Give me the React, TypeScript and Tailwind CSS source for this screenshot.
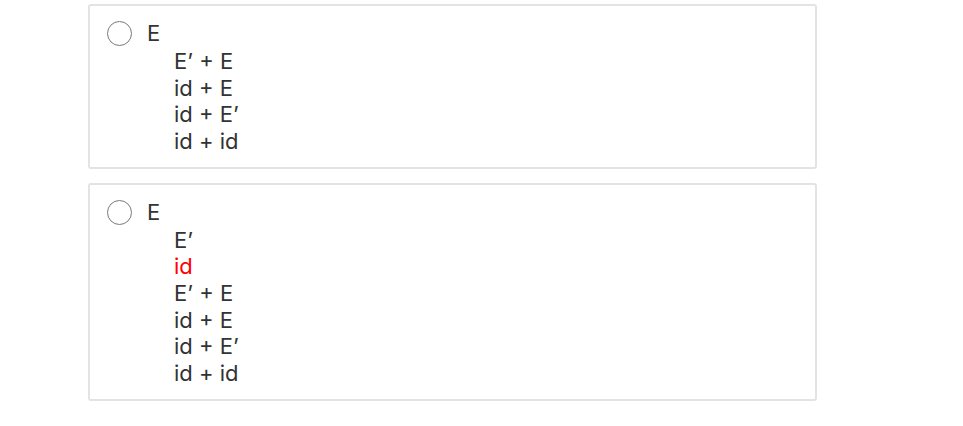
import React from 'react'

type Line = { text: string; red?: boolean }

interface Choice {
  id: string
  head: string
  lines: Line[]
}

const CHOICES: Choice[] = [
  {
    id: 'a',
    head: 'E',
    lines: [
      { text: 'E’ + E' },
      { text: 'id + E' },
      { text: 'id + E’' },
      { text: 'id + id' },
    ],
  },
  {
    id: 'b',
    head: 'E',
    lines: [
      { text: 'E’' },
      { text: 'id', red: true },
      { text: 'E’ + E' },
      { text: 'id + E' },
      { text: 'id + E’' },
      { text: 'id + id' },
    ],
  },
]

/* ─── One answer box ─────────────────────────────────────────────────────── */

function AnswerBox({ choice }: { choice: Choice }) {
  return (
    <label className="block w-[729px] rounded-[3px] border-2 border-[#e3e3e3] bg-white pt-[13px] pb-[12px] pl-[17px]">
      <div className="flex items-center h-[29px]">
        <span className="w-[25px] h-[25px] rounded-full border-[1.5px] border-[#7a7a7a] bg-white flex-shrink-0" />
        <span className="ml-[15px] leading-[29px]">{choice.head}</span>
      </div>
      <div className="pl-[42px] ml-[25px]">
        {choice.lines.map((line, i) => (
          <div
            key={i}
            className={line.red ? 'leading-[26.67px] text-[#ff0000]' : 'leading-[26.67px]'}
          >
            {line.text}
          </div>
        ))}
      </div>
    </label>
  )
}

export default function App() {
  return (
    <div
      className="min-h-[426px] bg-white pt-[4px] pl-[88px] text-[22px] text-[#333333]"
      style={{ fontFamily: 'Inter, "Liberation Sans", sans-serif' }}
    >
      <div className="flex flex-col gap-[14px]">
        {CHOICES.map((c) => (
          <AnswerBox key={c.id} choice={c} />
        ))}
      </div>
    </div>
  )
}
